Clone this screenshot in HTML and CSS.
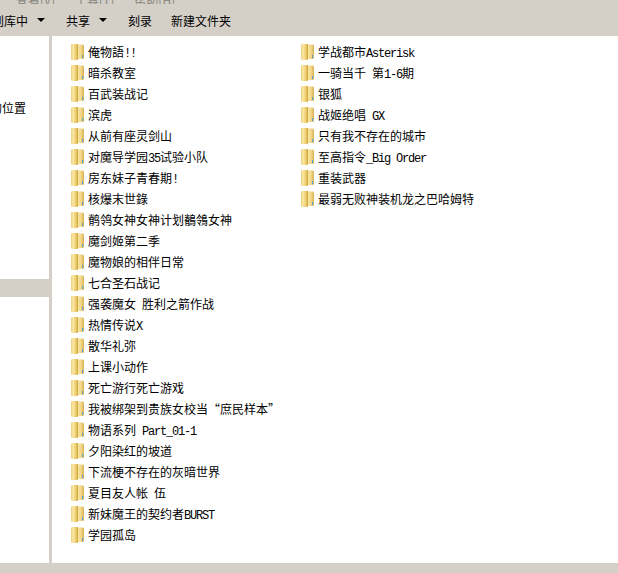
FILE: index.html
```html
<!DOCTYPE html>
<html lang="zh">
<head>
    <meta charset="UTF-8">
    <meta name="viewport" content="width=device-width, initial-scale=1.0">
    <title>动漫</title>
    <link rel="stylesheet" href="styles.css">
</head>
<body>
    <svg class="defs" width="0" height="0">
        <defs>
            <linearGradient id="folderLeft" x1="0" y1="0" x2="1" y2="0">
                <stop offset="0" stop-color="#e9cd78"/>
                <stop offset="0.3" stop-color="#fbe9a8"/>
                <stop offset="0.75" stop-color="#ebc968"/>
                <stop offset="1" stop-color="#c6a03c"/>
            </linearGradient>
            <linearGradient id="folderRight" x1="0" y1="0" x2="1" y2="0">
                <stop offset="0" stop-color="#fbeaa9"/>
                <stop offset="0.6" stop-color="#f2d688"/>
                <stop offset="1" stop-color="#d3b050"/>
            </linearGradient>
            <symbol id="folder" viewBox="0 0 13 16">
                <path d="M6 0.500h6l1 1v13l-1 0.500h-6z" fill="url(#folderRight)"/>
                <path d="M0 1l1-1h6v15.500l-1 0.500h-5l-1-1z" fill="url(#folderLeft)"/>
                <rect x="11" y="11" width="1" height="3" fill="#4fa3e3"/>
            </symbol>
        </defs>
    </svg>

    <div class="menu-cut">
        <span>查看(V)</span>
        <span>工具(T)</span>
        <span>帮助(H)</span>
    </div>

    <nav class="toolbar">
        <span class="tool tool-first">包含到库中<i class="caret"></i></span>
        <span class="tool">共享<i class="caret"></i></span>
        <span class="tool">刻录</span>
        <span class="tool">新建文件夹</span>
    </nav>

    <div class="main">
        <aside class="sidebar">
            <div class="side-place">最近访问的位置</div>
            <div class="side-selected"></div>
        </aside>
        <section class="files" id="files"></section>
    </div>

    <div class="statusbar"></div>

    <script src="app.js"></script>
</body>
</html>
```

FILE: styles.css
```css
html, body {
    margin: 0;
    height: 100%;
}
body {
    display: flex;
    flex-direction: column;
    height: 573px;
    overflow: hidden;
    background-color: #fff;
    color: #000;
    font-family: "Noto Sans CJK SC", "Liberation Sans", sans-serif;
    font-size: 12px;
}
.defs {
    position: absolute;
}
.menu-cut {
    display: flex;
    gap: 20px;
    flex: none;
    height: 4px;
    padding-left: 16px;
    overflow: hidden;
    background-color: #d4d0c8;
    color: #8a877f;
    line-height: 0;
}
.toolbar {
    display: flex;
    flex: none;
    align-items: center;
    gap: 19px;
    height: 32px;
    background-color: #d4d0c8;
}
.tool {
    display: flex;
    align-items: center;
    white-space: nowrap;
}
.tool-first {
    margin-left: -32px;
}
.caret {
    width: 0;
    height: 0;
    margin: 0 2px 0 9px;
    border-left: 4px solid transparent;
    border-right: 4px solid transparent;
    border-top: 4px solid #000;
}
.main {
    display: flex;
    flex: 1;
    min-height: 0;
}
.sidebar {
    position: relative;
    flex: none;
    width: 49px;
    border-right: 3px solid #d4d0c8;
    overflow: hidden;
}
.side-place {
    position: absolute;
    top: 63px;
    right: 23px;
    white-space: nowrap;
}
.side-selected {
    position: absolute;
    top: 243px;
    left: 0;
    right: 0;
    height: 18px;
    background-color: #d4d0c8;
}
.files {
    display: grid;
    grid-template-rows: repeat(24, 21px);
    grid-auto-flow: column;
    grid-auto-columns: 230px;
    padding: 5px 0 0 19px;
}
.file {
    display: flex;
    align-items: center;
    gap: 4px;
    white-space: nowrap;
}
.folder-icon {
    flex: none;
    width: 13px;
    height: 16px;
}
.latin {
    font-family: "Liberation Mono", "DejaVu Sans Mono", monospace;
    font-size: 12px;
    letter-spacing: -1.2px;
    white-space: pre;
}
.statusbar {
    flex: none;
    height: 10px;
    background-color: #d4d0c8;
}
```

FILE: app.js
```js
const names = [
    "俺物語!!", "暗杀教室", "百武装战记", "滨虎", "从前有座灵剑山",
    "对魔导学园35试验小队", "房东妹子青春期!", "核爆末世錄", "鹡鸰女神女神计划鶺鴒女神", "魔剑姬第二季",
    "魔物娘的相伴日常", "七合圣石战记", "强袭魔女 胜利之箭作战", "热情传说X", "散华礼弥",
    "上课小动作", "死亡游行死亡游戏", "我被绑架到贵族女校当“庶民样本”", "物语系列 Part_01-1", "夕阳染红的坡道",
    "下流梗不存在的灰暗世界", "夏目友人帐 伍", "新妹魔王的契约者BURST", "学园孤岛",
    "学战都市Asterisk", "一骑当千 第1-6期", "银狐", "战姬绝唱 GX", "只有我不存在的城市",
    "至高指令_Big Order", "重装武器", "最弱无败神装机龙之巴哈姆特"
];

const files = document.getElementById("files");

names.forEach(name => {
    const row = document.createElement("div");
    row.className = "file";
    // 拉丁字母用等宽字体,宽度和截图里的点阵字一致
    const label = name.replace(/[A-Za-z0-9_!\- ]+/g, m => `<span class="latin">${m}</span>`);
    row.innerHTML = `<svg class="folder-icon"><use href="#folder"/></svg><span>${label}</span>`;
    files.appendChild(row);
});
```
